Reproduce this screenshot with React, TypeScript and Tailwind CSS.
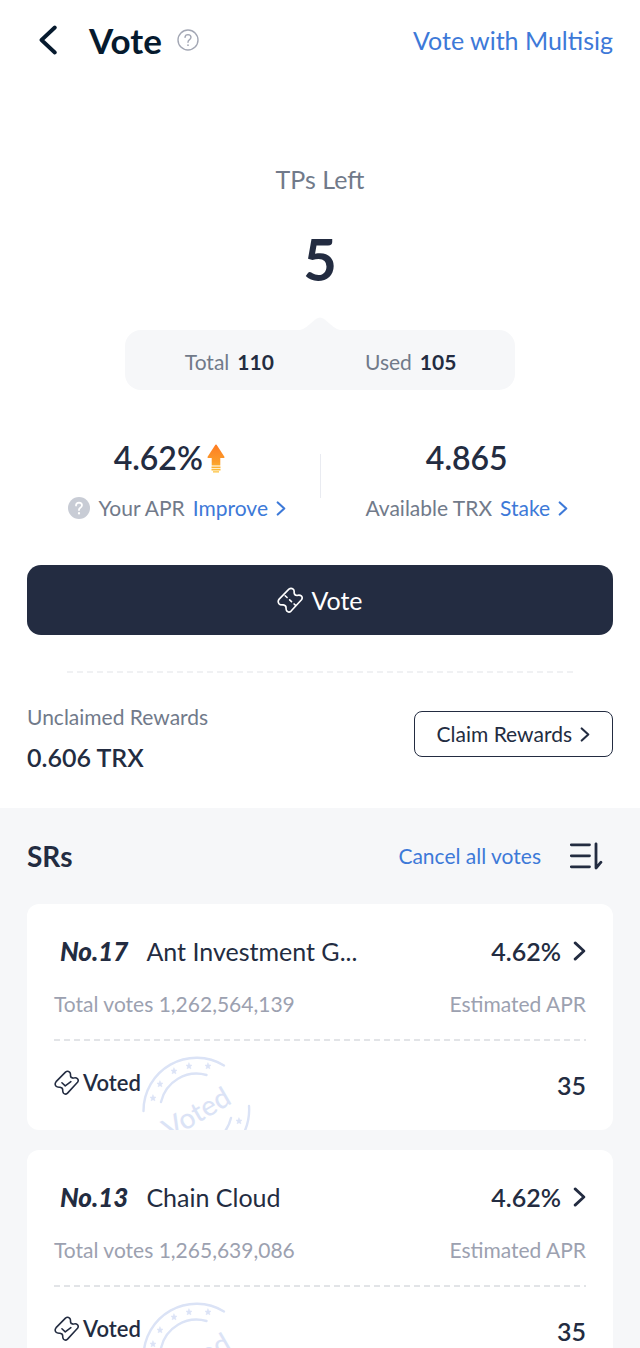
import { ReactNode } from "react";

type Representative = {
  rank: number;
  name: string;
  totalVotes: string;
  apr: string;
  voted: number;
};

const representatives: Representative[] = [
  { rank: 17, name: "Ant Investment G...", totalVotes: "1,262,564,139", apr: "4.62%", voted: 35 },
  { rank: 13, name: "Chain Cloud", totalVotes: "1,265,639,086", apr: "4.62%", voted: 35 },
];

const TICKET_OUTLINE =
  "M2 11.2 L11 2 Q13 .4 14.9 2 Q16.1 3.1 15.8 5 Q15.8 7.6 18.4 7.8 Q21 7 22.4 8.2 Q24 9.8 22.6 11.8 L13 22.2 Q11 24 9.2 22.3 Q8.2 21 8.4 19.3 Q8.4 16.8 5.8 16.5 Q3 16.8 1.8 15.4 Q.3 13.3 2 11.2 Z";

const Chevron = ({ className }: { className: string }) => (
  <svg viewBox="0 0 10 16" className={className} fill="none" stroke="currentColor" strokeWidth="2.2" strokeLinecap="round" strokeLinejoin="round" aria-hidden="true">
    <path d="M1.5 1.5 L8.5 8 L1.5 14.5" />
  </svg>
);

const TicketIcon = ({ className, children }: { className: string; children: ReactNode }) => (
  <svg viewBox="0 0 24 24" className={className} fill="none" stroke="currentColor" strokeWidth="1.5" strokeLinecap="round" strokeLinejoin="round" aria-hidden="true">
    <path d={TICKET_OUTLINE} />
    {children}
  </svg>
);

const BoostIcon = () => (
  <svg viewBox="0 0 18 29" className="h-[29px] w-[18px]" aria-hidden="true">
    <defs>
      <linearGradient id="boost" x1="0" y1="0" x2="0" y2="29" gradientUnits="userSpaceOnUse">
        <stop offset="0" stopColor="#ff7a22" />
        <stop offset="0.6" stopColor="#fb9c2a" />
        <stop offset="1" stopColor="#fdc53a" />
      </linearGradient>
    </defs>
    <path fill="url(#boost)" d="M8.4 .8 Q9 .2 9.6 .8 L17.4 12.8 Q17.9 14 16.8 14 H13.3 V21.5 H4.7 V14 H1.2 Q.1 14 .6 12.8 Z M4.5 22.6 H13.5 V24.2 H4.5 Z M4.5 25 H13.5 V26.4 H4.5 Z M6 27.2 H12 V28.6 H6 Z" />
  </svg>
);

const stars = [
  [13, 44],
  [20, 30],
  [34, 17],
  [49, 12],
  [68, 12],
  [99, 67],
];

const Stamp = () => (
  <svg viewBox="0 0 112 112" className="absolute top-[150px] left-[113px] size-[112px] text-[#dbe3f6]" fill="none" stroke="currentColor" strokeWidth="2.4" strokeLinecap="round" aria-hidden="true">
    <path d="M3.5 57 A53 53 0 0 1 84 11.5" />
    <path d="M21 48 A36.5 36.5 0 0 1 66.5 21" />
    <path d="M109 52 A53 53 0 0 1 84 101" />
    <path d="M91 64 A36.5 36.5 0 0 1 74 87" />
    {stars.map(([x, y]) => (
      <path
        key={x}
        transform={`translate(${x} ${y})`}
        d="M0 -3 L.9 -1 L3 -.8 L1.4 .7 L1.9 2.8 L0 1.7 L-1.9 2.8 L-1.4 .7 L-3 -.8 L-.9 -1 Z"
        fill="currentColor"
        strokeWidth="0.6"
        strokeLinejoin="round"
      />
    ))}
    <text transform="translate(93 49) rotate(-30)" textAnchor="end" fill="currentColor" stroke="none" className="text-[28px] font-medium">
      Voted
    </text>
  </svg>
);

const DashedLine = ({ className }: { className: string }) => (
  <div className={`h-[2px] bg-[repeating-linear-gradient(90deg,currentColor_0_6px,transparent_6px_10px)] ${className}`} />
);

const RepresentativeCard = ({ rank, name, totalVotes, apr, voted }: Representative) => (
  <li className="relative overflow-hidden rounded-xl bg-white px-[27px] pt-[31px]">
    <div className="flex h-8 items-center text-[25px] leading-8">
      <span className="pl-1.5 text-[26px] font-black italic">No.{rank}</span>
      <span className="pl-[18px]">{name}</span>
      <a href="#" className="ml-auto flex items-center gap-3 font-semibold">
        {apr}
        <Chevron className="h-[20px] w-[13px]" />
      </a>
    </div>
    <div className="mt-[23px] flex justify-between text-[21px] leading-7 text-[#9ca1b0]">
      <span>Total votes {totalVotes}</span>
      <span>Estimated APR</span>
    </div>
    <DashedLine className="mt-[21px] text-[#e2e4e7]" />
    <Stamp />
    <div className="relative flex h-[89px] items-center justify-between pb-0.5">
      <span className="flex items-center gap-1 pb-1 text-[22px] leading-7 font-semibold">
        <TicketIcon className="size-[25px]">
          <path d="M7.6 12.2 L10.8 15.2 L16.2 11.2" />
        </TicketIcon>
        Voted
      </span>
      <span className="text-[25px] leading-8 font-semibold">{voted}</span>
    </div>
  </li>
);

const App = () => {
  return (
    <main className="min-h-screen bg-[#f6f7f9] font-['Lato',sans-serif] text-[#232c41]">
      <div className="bg-white px-[27px] pb-[35px]">
        <header className="flex h-20 items-center">
          <button type="button" aria-label="Back" className="pl-3 text-[#061a2e]">
            <svg viewBox="0 0 18 30" className="h-[30px] w-[18px]" fill="none" stroke="currentColor" strokeWidth="3.8" strokeLinecap="round" strokeLinejoin="round" aria-hidden="true">
              <path d="M15.8 2.5 L2.5 15 L15.8 27.5" />
            </svg>
          </button>
          <h1 className="pl-8 text-[35px] leading-10 font-bold text-[#061a2e]">Vote</h1>
          <button type="button" aria-label="About voting" className="pl-[15px] text-[#a3a7b4]">
            <svg viewBox="0 0 22 22" className="size-[22px]" fill="none" stroke="currentColor" strokeWidth="1.4" strokeLinecap="round" aria-hidden="true">
              <circle cx="11" cy="11" r="10" />
              <path d="M8 8.4 Q8.2 5.6 11 5.6 Q13.9 5.7 14 8.3 Q13.9 9.9 12.3 10.8 Q11 11.6 11 13.2" />
              <path d="M11 16 V16.2" strokeWidth="1.7" />
            </svg>
          </button>
          <a href="#" className="ml-auto text-[25px] leading-8 text-[#3d79d8]">Vote with Multisig</a>
        </header>

        <section className="flex flex-col items-center pt-[83px]">
          <h2 className="text-[25px] leading-8 text-[#717a8a]">TPs Left</h2>
          <p className="mt-8 text-[58px] leading-16 font-bold">5</p>
          <svg viewBox="0 0 40 13" className="mt-[26px] h-[13px] w-10 text-[#f6f7f9]" fill="currentColor" aria-hidden="true">
            <path d="M0 13 Q4 12 7 9.5 L16 2 Q20 -1 24 2 L33 9.5 Q36 12 40 13 Z" />
          </svg>
          <dl className="flex h-15 w-2/3 items-center rounded-2xl bg-[#f6f7f9] px-3.5 pt-1 text-[21px] leading-7">
            <div className="flex flex-1 justify-center gap-2">
              <dt className="text-[#717a8a]">Total</dt>
              <dd className="font-bold">110</dd>
            </div>
            <div className="flex flex-1 justify-center gap-2">
              <dt className="text-[#717a8a]">Used</dt>
              <dd className="font-bold">105</dd>
            </div>
          </dl>
        </section>

        <section className="mt-12 flex items-center leading-7">
          <div className="flex w-1/2 flex-col items-center pl-2">
            <div className="flex items-center gap-1 pr-4 text-[32px] leading-10 font-semibold">
              4.62%
              <BoostIcon />
            </div>
            <div className="mt-4 flex items-center gap-2 text-[21px] text-[#717a8a]">
              <svg viewBox="0 0 22 22" className="size-[22px]" fill="none" strokeLinecap="round" aria-hidden="true">
                <circle cx="11" cy="11" r="11" fill="#c8ccd5" />
                <path d="M8 8.5 Q8.2 5.7 11 5.7 Q13.9 5.8 14 8.3 Q13.9 9.9 12.3 10.8 Q11 11.6 11 13" stroke="white" strokeWidth="1.8" />
                <path d="M11 16.2 V16.4" stroke="white" strokeWidth="2.2" />
              </svg>
              <span>Your APR</span>
              <a href="#" className="flex items-center gap-2 text-[#3d79d8]">
                Improve
                <Chevron className="h-[15px] w-[10px]" />
              </a>
            </div>
          </div>
          <div className="mb-2 h-11 w-px bg-[#e9ebf1]" />
          <div className="flex w-1/2 flex-col items-center">
            <div className="text-[32px] leading-10 font-semibold">4.865</div>
            <div className="mt-4 flex items-center gap-2 text-[21px] text-[#717a8a]">
              <span>Available TRX</span>
              <a href="#" className="flex items-center gap-2 text-[#3d79d8]">
                Stake
                <Chevron className="h-[15px] w-[10px]" />
              </a>
            </div>
          </div>
        </section>

        <button type="button" className="mt-[43px] flex h-[70px] w-full items-center justify-center gap-2 rounded-[14px] bg-[#232c41] text-[25px] leading-8 text-white">
          <TicketIcon className="size-[26px]">
            <path d="M6.8 7.4 L17.2 17" strokeDasharray="2.4 3.2" strokeDashoffset="-1" />
          </TicketIcon>
          Vote
        </button>

        <DashedLine className="mx-10 mt-9 text-[#f0f1f3]" />

        <section className="mt-[30px] flex items-center justify-between">
          <div>
            <h2 className="text-[21px] leading-7 text-[#717a8a]">Unclaimed Rewards</h2>
            <p className="mt-2.5 text-[25px] leading-8 font-semibold">0.606 TRX</p>
          </div>
          <button type="button" className="mb-2 flex h-[46px] items-center gap-2 rounded-lg border border-[#232c41] px-[22px] text-[21px] leading-7">
            Claim Rewards
            <Chevron className="h-[15px] w-[10px]" />
          </button>
        </section>
      </div>

      <section className="px-[27px] pb-5">
        <div className="flex h-24 items-center">
          <h2 className="text-[28px] leading-8 font-bold">SRs</h2>
          <button type="button" className="ml-auto text-[21px] leading-7 text-[#3d79d8]">Cancel all votes</button>
          <button type="button" aria-label="Sort" className="pr-2.5 pl-7">
            <svg viewBox="0 0 34 28" className="h-7 w-[34px]" fill="none" stroke="currentColor" strokeWidth="2.8" strokeLinecap="round" strokeLinejoin="round" aria-hidden="true">
              <path d="M2.3 2.8 H20.5 M2.3 13.8 H20.5 M2.3 24.8 H20.5 M27 1.8 V26 L32 20.2" />
            </svg>
          </button>
        </div>
        <ul className="flex flex-col gap-5">
          {representatives.map((item) => (
            <RepresentativeCard key={item.rank} {...item} />
          ))}
        </ul>
      </section>
    </main>
  );
};

export default App;
